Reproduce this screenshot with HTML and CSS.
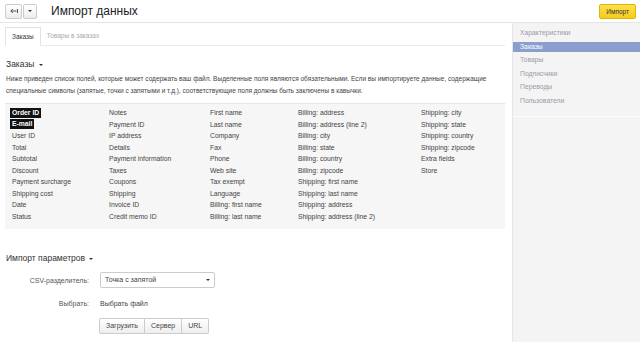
FILE: index.html
```html
<!DOCTYPE html>
<html lang="ru">
<head>
    <meta charset="UTF-8">
    <title>Импорт данных</title>
    <link rel="stylesheet" href="styles.css">
</head>
<body>
    <div class="topbar">
        <div class="nav-btns">
            <span class="btn-sm btn-back">
                <svg width="8" height="6" viewBox="0 0 8 6"><path d="M6.5 3H0.8M2.8 1L0.8 3L2.8 5" fill="none" stroke="#555" stroke-width="1"/><path d="M7.5 1V5" stroke="#555" stroke-width="1"/></svg>
            </span>
            <span class="btn-sm btn-caret"><i class="caret"></i></span>
        </div>
        <h1>Импорт данных</h1>
        <span class="btn-import">Импорт</span>
    </div>

    <div class="layout">
        <div class="main">
            <div class="tabs">
                <span class="tab active">Заказы</span>
                <span class="tab">Товары в заказах</span>
            </div>

            <h2>Заказы <i class="caret"></i></h2>
            <p class="hint">Ниже приведен список полей, которые может содержать ваш файл. Выделенные поля являются обязательными. Если вы импортируете данные, содержащие специальные символы (запятые, точки с запятыми и т.д.), соответствующие поля должны быть заключены в кавычки.</p>

            <div class="fields">
                <div class="col c1">
                    <span class="req">Order ID</span>
                    <span class="req">E-mail</span>
                    <span>User ID</span>
                    <span>Total</span>
                    <span>Subtotal</span>
                    <span>Discount</span>
                    <span>Payment surcharge</span>
                    <span>Shipping cost</span>
                    <span>Date</span>
                    <span>Status</span>
                </div>
                <div class="col c2">
                    <span>Notes</span>
                    <span>Payment ID</span>
                    <span>IP address</span>
                    <span>Details</span>
                    <span>Payment information</span>
                    <span>Taxes</span>
                    <span>Coupons</span>
                    <span>Shipping</span>
                    <span>Invoice ID</span>
                    <span>Credit memo ID</span>
                </div>
                <div class="col c3">
                    <span>First name</span>
                    <span>Last name</span>
                    <span>Company</span>
                    <span>Fax</span>
                    <span>Phone</span>
                    <span>Web site</span>
                    <span>Tax exempt</span>
                    <span>Language</span>
                    <span>Billing: first name</span>
                    <span>Billing: last name</span>
                </div>
                <div class="col c4">
                    <span>Billing: address</span>
                    <span>Billing: address (line 2)</span>
                    <span>Billing: city</span>
                    <span>Billing: state</span>
                    <span>Billing: country</span>
                    <span>Billing: zipcode</span>
                    <span>Shipping: first name</span>
                    <span>Shipping: last name</span>
                    <span>Shipping: address</span>
                    <span>Shipping: address (line 2)</span>
                </div>
                <div class="col c5">
                    <span>Shipping: city</span>
                    <span>Shipping: state</span>
                    <span>Shipping: country</span>
                    <span>Shipping: zipcode</span>
                    <span>Extra fields</span>
                    <span>Store</span>
                </div>
            </div>

            <h2 class="params-title">Импорт параметров <i class="caret"></i></h2>

            <div class="form-row first">
                <label>CSV-разделитель:</label>
                <div class="select">Точка с запятой <i class="caret"></i></div>
            </div>
            <div class="form-row">
                <label>Выбрать:</label>
                <span class="file-text">Выбрать файл</span>
            </div>
            <div class="form-row">
                <label></label>
                <div class="btn-group">
                    <span>Загрузить</span>
                    <span>Сервер</span>
                    <span>URL</span>
                </div>
            </div>
        </div>

        <div class="sidebar">
            <ul class="side-menu">
                <li>Характеристики</li>
                <li class="active">Заказы</li>
                <li>Товары</li>
                <li>Подписчики</li>
                <li>Переводы</li>
                <li>Пользователи</li>
            </ul>
        </div>
    </div>
</body>
</html>
```

FILE: styles.css
```css
body {
    margin: 0;
    font-family: "Liberation Sans", Arial, sans-serif;
    font-size: 7px;
    color: #333;
    background: #fff;
}
.topbar {
    height: 22px;
    border-bottom: 1px solid #e4e4e4;
    display: flex;
    align-items: center;
    padding: 0 4px 0 5px;
}
.nav-btns {
    display: flex;
    gap: 1px;
}
.btn-sm {
    height: 13px;
    border: 1px solid #ccc;
    border-radius: 2px;
    background: linear-gradient(#fff, #ececec);
    display: flex;
    align-items: center;
    justify-content: center;
}
.btn-back {
    width: 15px;
}
.btn-caret {
    width: 12px;
}
.caret {
    display: inline-block;
    width: 0;
    height: 0;
    border-left: 2px solid transparent;
    border-right: 2px solid transparent;
    border-top: 2.5px solid #333;
    vertical-align: middle;
}
h1 {
    font-size: 12px;
    font-weight: normal;
    margin: 0 0 0 14px;
    color: #222;
    flex: 1;
}
.btn-import {
    background: linear-gradient(#fde04e, #f7cc1a);
    border: 1px solid #e2b700;
    border-radius: 2px;
    padding: 0 6px;
    height: 13px;
    line-height: 13px;
    font-size: 6.5px;
    color: #333;
}
.layout {
    display: flex;
    min-height: 319px;
}
.main {
    width: 512px;
    padding-top: 4px;
}
.tabs {
    display: flex;
    height: 18px;
    margin: 0 0 0 5px;
    border-bottom: 1px solid #eaeaea;
    width: 500px;
}
.tab {
    padding: 0 8px 0 6px;
    line-height: 18px;
    color: #aaa;
    font-size: 6.5px;
}
.tab.active {
    color: #333;
    border: 1px solid #e2e2e2;
    border-bottom: 1px solid #fff;
    margin-bottom: -1px;
    line-height: 17px;
    padding: 0 6px;
}
h2 {
    font-size: 8.5px;
    font-weight: normal;
    margin: 13px 0 0 6px;
    color: #333;
}
h2 .caret {
    margin-left: 2px;
}
.hint {
    margin: 4px 0 0 6px;
    width: 500px;
    line-height: 12px;
    font-size: 6.5px;
    color: #444;
}
.fields {
    margin: 6px 0 0 5px;
    width: 500px;
    background: #f6f6f6;
    border-top: 1px solid #e6e6e6;
    display: flex;
    padding: 3px 0 0 7px;
    box-sizing: border-box;
    height: 126px;
}
.col {
    display: flex;
    flex-direction: column;
    align-items: flex-start;
}
.col span {
    line-height: 11.5px;
    height: 11.5px;
    font-size: 6.8px;
    color: #444;
}
.col span.req {
    background: #111;
    color: #fff;
    font-weight: bold;
    margin-left: -2px;
    padding: 0 2px;
    height: 10px;
    line-height: 10px;
    margin-top: 0.75px;
    margin-bottom: 0.75px;
}
.c1 { width: 97px; }
.c2 { width: 101px; }
.c3 { width: 88px; }
.c4 { width: 123px; }
.params-title {
    margin-top: 24px;
}
.form-row {
    display: flex;
    align-items: center;
    height: 16px;
}
.form-row label {
    width: 89px;
    text-align: right;
    margin-right: 11px;
    color: #555;
}
.form-row.first {
    margin-top: 9px;
}
.select {
    width: 105px;
    height: 14px;
    line-height: 14px;
    border: 1px solid #ccc;
    border-radius: 2px;
    padding: 0 4px;
    display: flex;
    justify-content: space-between;
    align-items: center;
    color: #444;
}
.file-text {
    color: #444;
}
.form-row + .form-row {
    margin-top: 7px;
}
.btn-group {
    display: flex;
    height: 16px;
    margin-left: -1px;
}
.btn-group span {
    border: 1px solid #ccc;
    background: linear-gradient(#fff, #eee);
    line-height: 14px;
    padding: 0 6px;
    color: #444;
}
.btn-group span + span {
    border-left: none;
}
.btn-group span:first-child {
    border-radius: 2px 0 0 2px;
}
.btn-group span:last-child {
    border-radius: 0 2px 2px 0;
}
.sidebar {
    flex: 1;
    background: #f4f4f4;
    border-left: 1px solid #e6e6e6;
}
.side-menu {
    list-style: none;
    margin: 0;
    padding: 5px 0 7px;
    border-bottom: 1px solid #fcfcfc;
}
.side-menu li {
    height: 10px;
    line-height: 10px;
    margin-bottom: 3.5px;
    padding-left: 7px;
    color: #9a9aaa;
    font-size: 6.8px;
}
.side-menu li.active {
    background: #8a9fcd;
    color: #fff;
}
```
